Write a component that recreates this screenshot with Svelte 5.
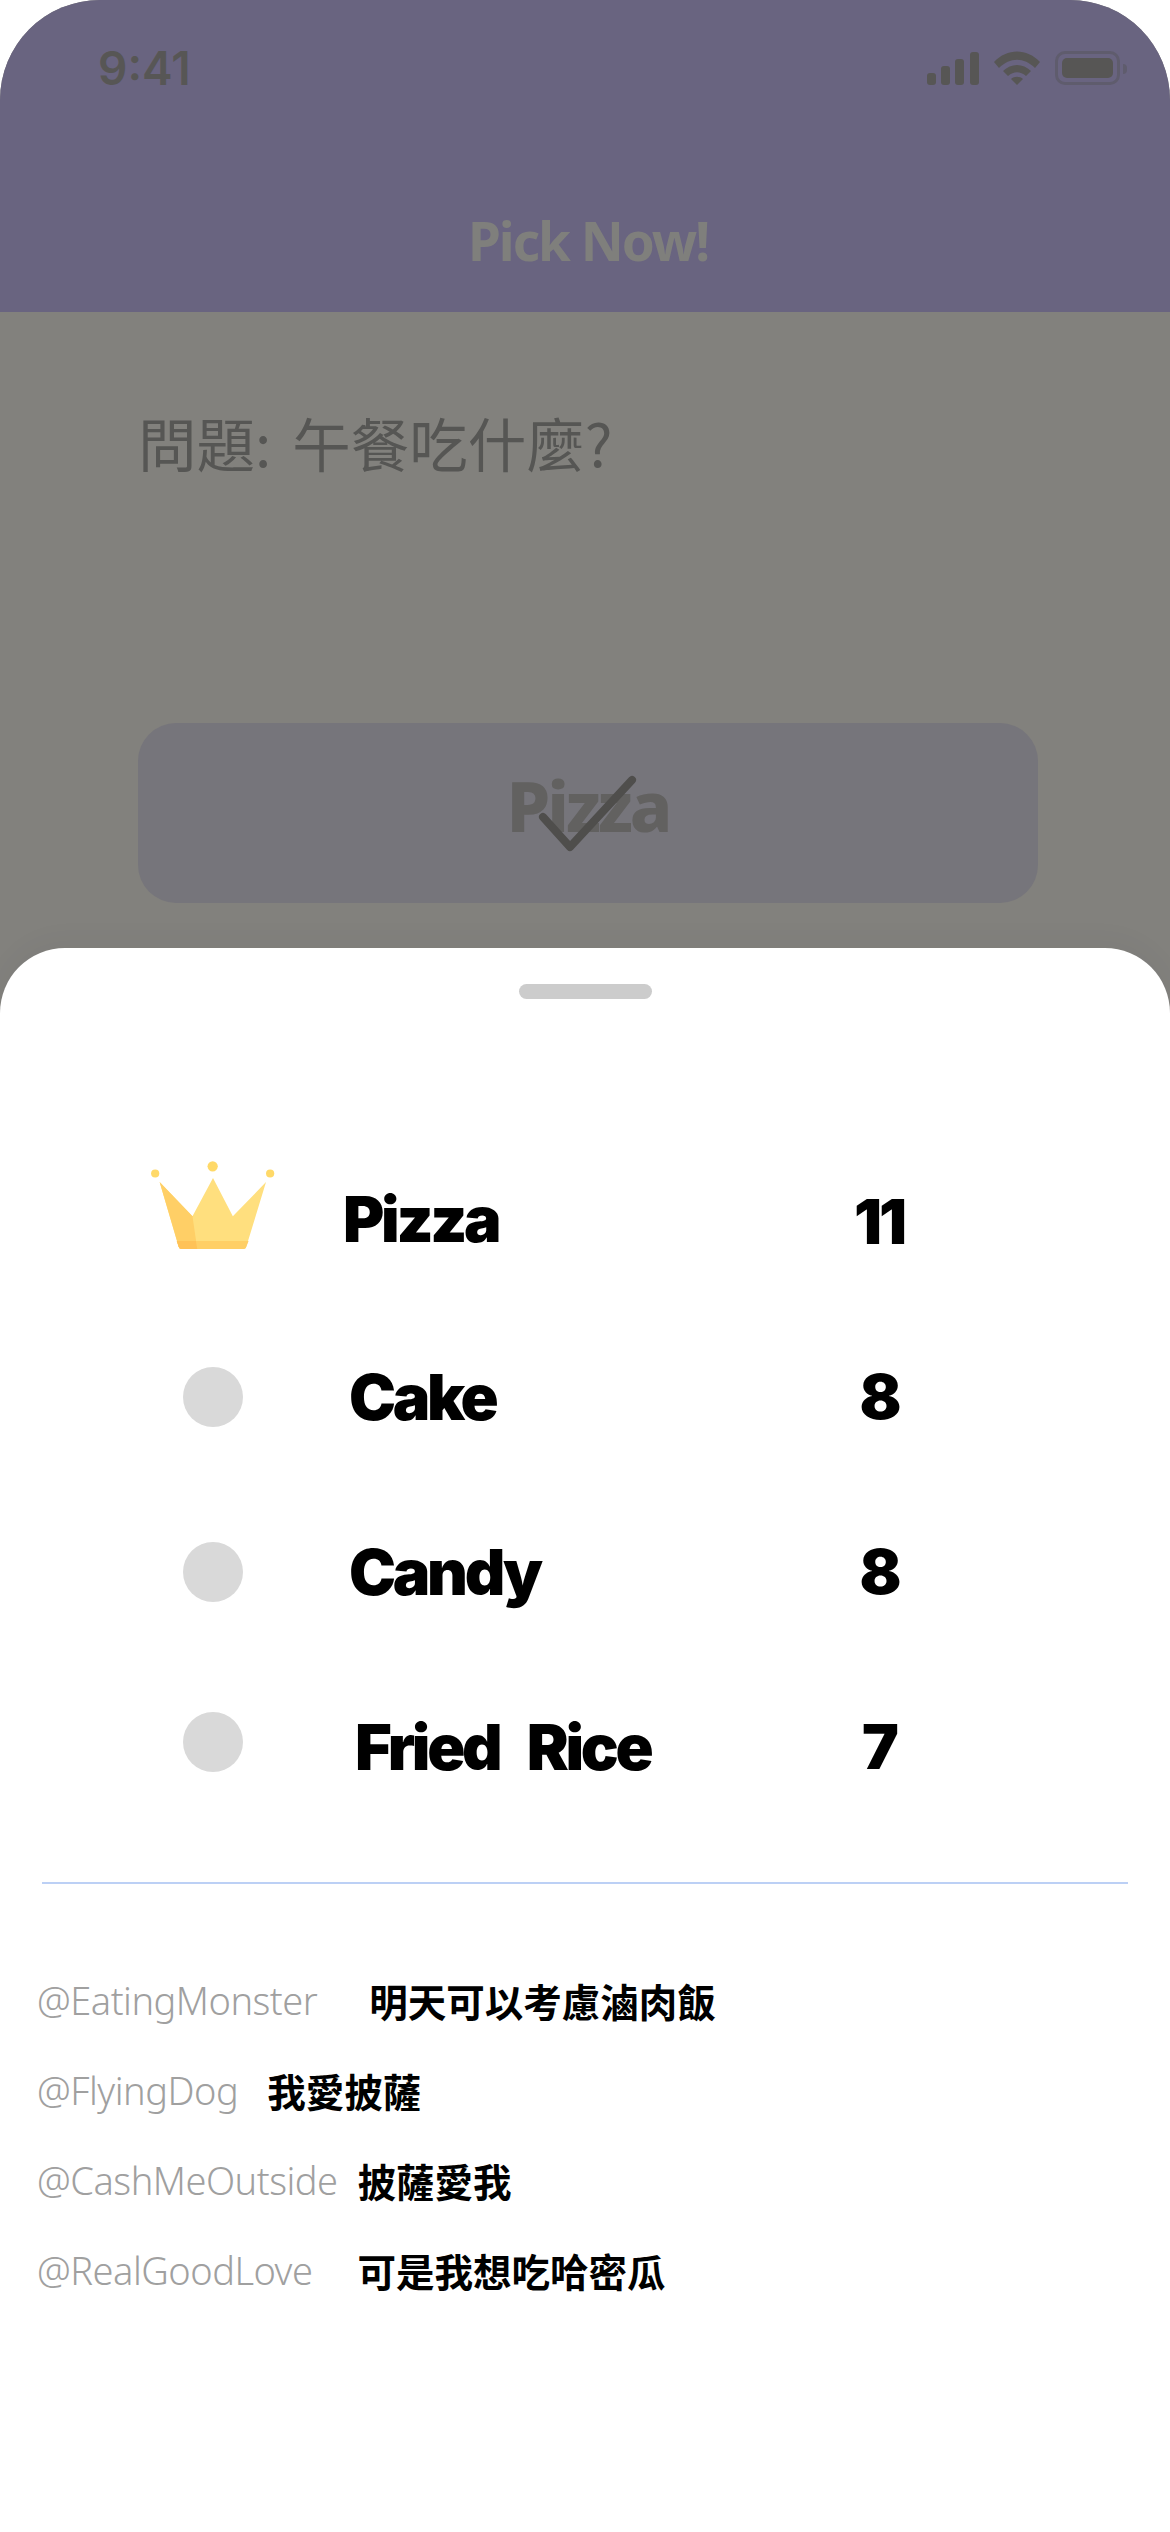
<script lang="ts">
  const results = [
    { name: 'Pizza', votes: 11, cls: 'first' },
    { name: 'Cake', votes: 8, cls: 'second' },
    { name: 'Candy', votes: 8, cls: 'third' },
    { name: 'Fried Rice', votes: 7, cls: 'fourth' }
  ];

  const comments = [
    { user: '@EatingMonster', text: '明天可以考慮滷肉飯', cls: 'gap-xl' },
    { user: '@FlyingDog', text: '我愛披薩', cls: 'gap-m' },
    { user: '@CashMeOutside', text: '披薩愛我', cls: 'gap-s' },
    { user: '@RealGoodLove', text: '可是我想吃哈密瓜', cls: 'gap-l' }
  ];
</script>

<div class="screen">
  <header class="topbar">
    <div class="status">
      <span class="time">9:41</span>
      <div class="status-icons">
        <svg width="52" height="33" viewBox="0 0 52 33">
          <rect x="0" y="21" width="9" height="12" rx="3" />
          <rect x="14" y="14" width="9" height="19" rx="3" />
          <rect x="28" y="7" width="9" height="26" rx="3" />
          <rect x="43" y="0" width="9" height="33" rx="3" />
        </svg>
        <svg width="46" height="34" viewBox="0 0 46 34">
          <path d="M0 11 C13 -3 33 -3 46 11 L41 17 C30 6 16 6 5 17 Z" />
          <path d="M9 20 C17 12 29 12 37 20 L32 25 C26 20 20 20 14 25 Z" />
          <path d="M17 28 C20 25 26 25 29 28 L23 34 Z" />
        </svg>
        <div class="battery"><div class="battery-fill"></div></div>
      </div>
    </div>
    <h1>Pick Now!</h1>
  </header>

  <main class="question">
    <p class="prompt">問題: 午餐吃什麼?</p>
    <div class="option">
      <span>Pizza</span>
      <svg class="check" width="102" height="80" viewBox="0 0 102 80">
        <path d="M6 43 L33 73 L95 6" />
      </svg>
    </div>
  </main>

  <section class="sheet">
    <div class="handle"></div>

    <div class="results">
      {#each results as r, i}
        <div class="result {r.cls}">
          <div class="rank">
            {#if i === 0}
              <svg width="130" height="96" viewBox="60 90 380 280">
                <path fill="#ffdf7e" d="M94 160 L190 260 L250 148 L308 260 L405 160 L347 350 Q345 356 340 356 L158 356 Q152 356 150 350 Z" />
                <path fill="#ffcf66" d="M94 160 L190 260 L204 356 L158 356 Q152 356 150 350 Z" />
                <path fill="#ffcf66" d="M144 332 L354 332 L347 350 Q345 356 340 356 L158 356 Q152 356 150 350 Z" />
                <path fill="#ffc257" d="M144 332 L200 332 L204 356 L158 356 Q152 356 150 350 Z" />
                <circle cx="81" cy="135" r="12" fill="#ffd968" />
                <circle cx="249" cy="114" r="15" fill="#ffd968" />
                <circle cx="417" cy="135" r="12" fill="#ffd968" />
              </svg>
            {:else}
              <div class="dot"></div>
            {/if}
          </div>
          <span class="name">{r.name}</span>
          <span class="votes">{r.votes}</span>
        </div>
      {/each}
    </div>

    <div class="divider"></div>

    <ul class="comments">
      {#each comments as c}
        <li class={c.cls}>
          <span class="user">{c.user}</span>
          <span class="text">{c.text}</span>
        </li>
      {/each}
    </ul>
  </section>
</div>

<style>
  :global(body) {
    margin: 0;
    background: #fff;
  }

  .screen {
    position: relative;
    width: 1170px;
    height: 2532px;
    overflow: hidden;
    background: #82817d;
    border-radius: 100px 100px 0 0;
    font-family: 'Noto Sans', 'Noto Sans CJK TC', sans-serif;
  }

  .topbar {
    height: 312px;
    box-sizing: border-box;
    padding: 50px 50px 0 98px;
    background: #696480;
  }

  .status {
    display: flex;
    justify-content: space-between;
    align-items: center;
  }

  .time {
    font-family: Inter, sans-serif;
    font-size: 46px;
    font-weight: 600;
    line-height: 36px;
    color: #575655;
  }

  .status-icons {
    display: flex;
    align-items: center;
    gap: 15px;
    fill: #575655;
  }

  .battery {
    position: relative;
    box-sizing: border-box;
    width: 65px;
    height: 34px;
    padding: 4px;
    border: 3px solid #5f5c6d;
    border-radius: 10px;
  }

  .battery::after {
    content: '';
    position: absolute;
    right: -10px;
    top: 10px;
    width: 4px;
    height: 10px;
    border-radius: 0 4px 4px 0;
    background: #5f5c6d;
  }

  .battery-fill {
    height: 100%;
    border-radius: 5px;
    background: #575655;
  }

  h1 {
    margin: 120px 0 0 -42px;
    font-size: 53px;
    font-weight: 700;
    line-height: 70px;
    letter-spacing: -2px;
    text-align: center;
    color: #7f7f7c;
  }

  .question {
    padding: 90px 132px 0 138px;
  }

  .prompt {
    margin: 0;
    font-family: 'Noto Sans CJK TC', sans-serif;
    font-size: 58.5px;
    font-weight: 400;
    line-height: 80px;
    word-spacing: 8px;
    color: #565654;
  }

  .option {
    position: relative;
    display: flex;
    align-items: center;
    justify-content: center;
    box-sizing: border-box;
    height: 180px;
    margin-top: 241px;
    padding-bottom: 16px;
    border-radius: 38px;
    background: #76757b;
  }

  .option span {
    font-size: 70px;
    font-weight: 800;
    letter-spacing: -3px;
    color: #626160;
  }

  .check {
    position: absolute;
    left: 399px;
    top: 51px;
    fill: none;
    stroke: #4f4e4c;
    stroke-width: 8;
    stroke-linecap: round;
    stroke-linejoin: round;
  }

  .sheet {
    position: absolute;
    left: 0;
    right: 0;
    top: 948px;
    bottom: 0;
    padding-top: 36px;
    background: #fff;
    border-radius: 65px 65px 0 0;
    box-shadow: 0 -8px 30px rgba(0, 0, 0, 0.03);
  }

  .handle {
    width: 133px;
    height: 15px;
    margin: 0 auto;
    border-radius: 8px;
    background: #ccc;
  }

  .results {
    margin-top: 135px;
    padding-left: 153px;
  }

  .result {
    display: grid;
    grid-template-columns: 196px 499px 62px;
    align-items: center;
    height: 175px;
  }

  .rank {
    display: flex;
    justify-content: center;
    width: 120px;
  }

  .first svg {
    flex-shrink: 0;
    margin-bottom: 32px;
  }

  .dot {
    width: 60px;
    height: 60px;
    border-radius: 50%;
    background: #d9d9d9;
  }

  .fourth .dot {
    margin-bottom: 10px;
  }

  .name {
    font-family: Inter, sans-serif;
    font-size: 63px;
    font-weight: 900;
    letter-spacing: -3.3px;
    word-spacing: 18px;
    color: #000;
  }

  .first .name { margin: 0 0 6px -6px; }
  .fourth .name { margin-left: 6px; }

  .votes {
    font-family: Inter, sans-serif;
    font-size: 62px;
    font-weight: 900;
    letter-spacing: -3px;
    text-align: center;
    color: #000;
  }

  .divider {
    height: 2px;
    margin: 48px 42px 0;
    background: #bcd0f5;
  }

  .comments {
    display: flex;
    flex-direction: column;
    gap: 38px;
    margin: 90px 0 0;
    padding: 0 0 0 37px;
    list-style: none;
  }

  .comments li {
    display: flex;
    align-items: center;
    height: 52px;
  }

  .gap-xl { gap: 52px; }
  .gap-l { gap: 45px; }
  .gap-m { gap: 29px; }
  .gap-s { gap: 20px; }

  .user {
    font-size: 38px;
    font-weight: 300;
    letter-spacing: -0.5px;
    color: #a0a0a0;
  }

  .text {
    font-family: 'Noto Sans CJK TC', sans-serif;
    font-size: 38.5px;
    font-weight: 700;
    color: #000;
  }
</style>
